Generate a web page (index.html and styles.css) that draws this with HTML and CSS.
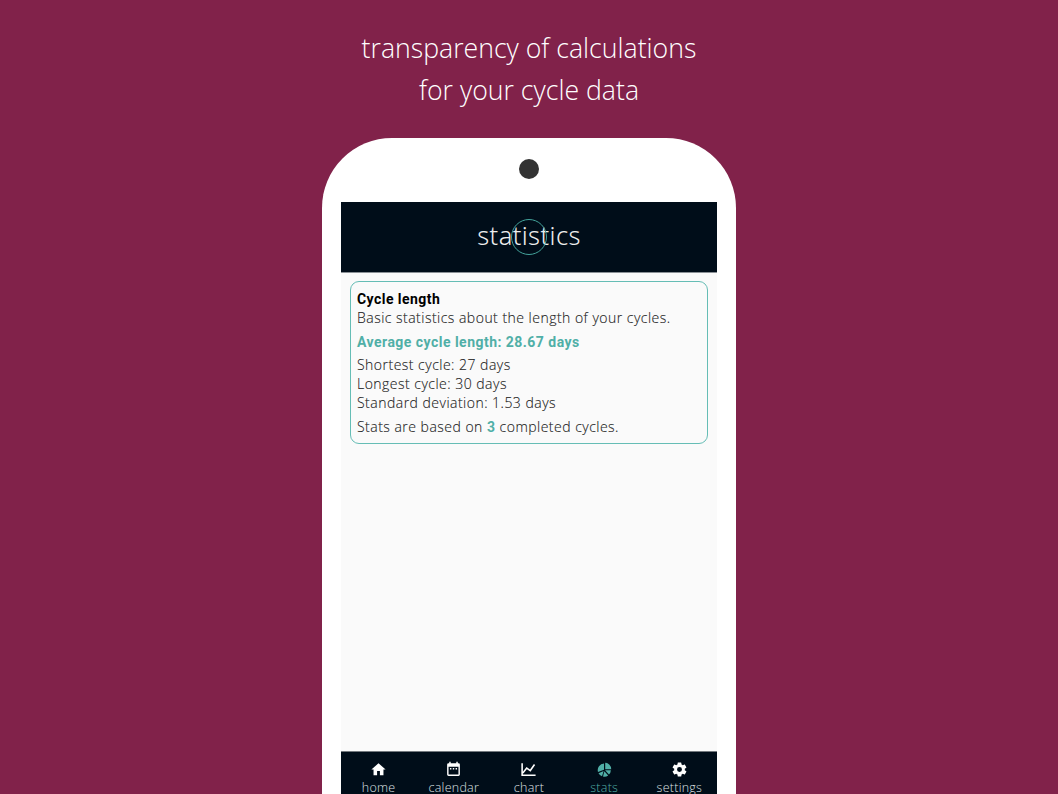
FILE: index.html
```html
<!DOCTYPE html>
<html lang="en">
<head>
<meta charset="utf-8">
<title>Cycle statistics</title>
<link rel="stylesheet" href="styles.css">
</head>
<body>
<h1 class="headline">transparency of calculations<br>for your cycle data</h1>
<main class="phone">
  <div class="camera"></div>
  <div class="screen">
    <header class="header"><span class="title">statistics</span><span class="ring"></span></header>
    <div class="content">
      <section class="card">
        <h2 class="card-title">Cycle length</h2>
        <p class="intro">Basic statistics about the length of your cycles.</p>
        <p class="average">Average cycle length: 28.67 days</p>
        <p>Shortest cycle: 27 days</p>
        <p>Longest cycle: 30 days</p>
        <p>Standard deviation: 1.53 days</p>
        <p class="basis">Stats are based on <b>3</b> completed cycles.</p>
      </section>
    </div>
    <nav class="nav">
      <a class="tab"><svg class="icon" viewBox="0 0 24 24"><path d="M10 20v-6h4v6h5v-8h3L12 3 2 12h3v8z"/></svg><span>home</span></a>
      <a class="tab"><svg class="icon" viewBox="0 0 24 24"><path d="M9 10H7v2h2zm4 0h-2v2h2zm4 0h-2v2h2zm2-7h-1V1h-2v2H8V1H6v2H5a2 2 0 0 0-2 2v14a2 2 0 0 0 2 2h14a2 2 0 0 0 2-2V5a2 2 0 0 0-2-2zm0 16H5V8h14z"/></svg><span>calendar</span></a>
      <a class="tab"><svg class="icon" viewBox="0 0 24 24"><path d="M3 3v17h19M4 17l5.500-7 5 3.500L20.500 5" fill="none" stroke="currentColor" stroke-width="2.200"/></svg><span>chart</span></a>
      <a class="tab active"><svg class="icon" viewBox="0 0 24 24"><path d="M13 2.500a9 9 0 0 1 8.500 9H13zM11.300 3.500v8.700L2.800 15.500A9.500 9.500 0 0 1 11.300 3.500zM3.500 17.200l7.300-3-2.300 7.200a9 9 0 0 1-5-4.200zM12.800 13.200H21a9 9 0 0 1-2.700 6zM11.800 14.400l5.400 6a9 9 0 0 1-7.300 1.500z"/></svg><span>stats</span></a>
      <a class="tab"><svg class="icon" viewBox="0 0 24 24"><path d="M12 15.500A3.500 3.500 0 0 1 8.500 12 3.500 3.500 0 0 1 12 8.500a3.500 3.500 0 0 1 3.500 3.500 3.500 3.500 0 0 1-3.500 3.500m7.430-2.530c.04-.32.070-.64.070-.97s-.03-.66-.07-1l2.110-1.630c.19-.15.240-.42.120-.64l-2-3.460c-.12-.22-.39-.31-.61-.22l-2.490 1c-.52-.39-1.060-.73-1.690-.98l-.37-2.650A.506.506 0 0 0 14 2h-4c-.25 0-.46.180-.5.420l-.37 2.650c-.63.250-1.170.59-1.690.98l-2.490-1c-.22-.09-.49 0-.61.220l-2 3.460c-.13.220-.07.490.12.640L4.570 11c-.04.340-.07.670-.07 1s.030.650.070.970l-2.110 1.660c-.19.150-.25.420-.12.640l2 3.460c.12.220.39.300.61.220l2.490-1.010c.52.400 1.060.740 1.690.990l.37 2.650c.04.240.25.420.5.420h4c.25 0 .46-.18.500-.42l.37-2.650c.63-.26 1.170-.59 1.690-.99l2.490 1.010c.22.080.49 0 .61-.22l2-3.460c.12-.22.070-.49-.12-.64z"/></svg><span>settings</span></a>
    </nav>
  </div>
</main>
</body>
</html>
```
FILE: styles.css
```css
* { box-sizing: border-box; }
body { margin: 0; height: 794px; overflow: hidden; background: #81224a; font-family: "Open Sans", sans-serif; display: flex; flex-direction: column; align-items: center; }
h1, h2, p { margin: 0; font-weight: 400; }
.headline { height: 138px; flex: none; padding-top: 27px; color: #fff; text-align: center; font-size: 26.67px; line-height: 42px; font-weight: 300; }
.phone { width: 414.5px; height: 656px; flex: none; background: #fff; border-radius: 70px 70px 0 0; display: flex; flex-direction: column; align-items: center; padding-top: 21px; }
.camera { width: 20px; height: 20px; border-radius: 50%; background: #333; margin-bottom: 23px; flex: none; }
.screen { width: 376px; height: 592px; background: #fafafa; display: flex; flex-direction: column; }
.header { height: 70px; flex: none; background: #000d19; display: grid; place-items: center; box-shadow: 0 1px 0 #8b9196; }
.header > * { grid-area: 1 / 1; }
.title { color: #eee; font-family: "Noto Sans", sans-serif; font-weight: 300; font-size: 25.5px; line-height: 34px; letter-spacing: .4px; margin-top: -4px; }
.ring { width: 36px; height: 36px; border: 1px solid #44a39b; border-radius: 50%; }
.content { flex: 1; padding: 9px 9px 0; }
.card { height: 163px; border: 1px solid #65bdb5; border-radius: 9px; padding: 8px 6px; color: #222; font-size: 14px; line-height: 19px; white-space: nowrap; letter-spacing: .48px; }
.card p { font-weight: 300; -webkit-text-stroke: .12px currentColor; }
.card .card-title { font: 700 14px/19px Roboto, sans-serif; color: #000; letter-spacing: .45px; }
.card .intro { margin-top: -1px; }
.card .average { font-family: Roboto, sans-serif; font-weight: 700; color: #50afa7; margin: 6px 0 3px; letter-spacing: .47px; -webkit-text-stroke: 0; }
.card .basis { margin-top: 5px; }
.basis b { font-family: Roboto, sans-serif; font-weight: 700; color: #50afa7; -webkit-text-stroke: 0; }
.nav { height: 43px; flex: none; background: #000d19; border-top: 1px solid #73797e; display: grid; grid-template-columns: repeat(5, 1fr); }
.tab { display: flex; flex-direction: column; align-items: center; padding-top: 9px; color: #fff; font-size: 12.5px; line-height: 14px; font-weight: 300; }
.tab span { color: #dde0e2; margin-top: 3px; line-height: 13px; letter-spacing: .25px; }
.tab.active, .tab.active span { color: #50afa7; }
.icon { width: 17px; height: 17px; fill: currentColor; flex: none; }
```
